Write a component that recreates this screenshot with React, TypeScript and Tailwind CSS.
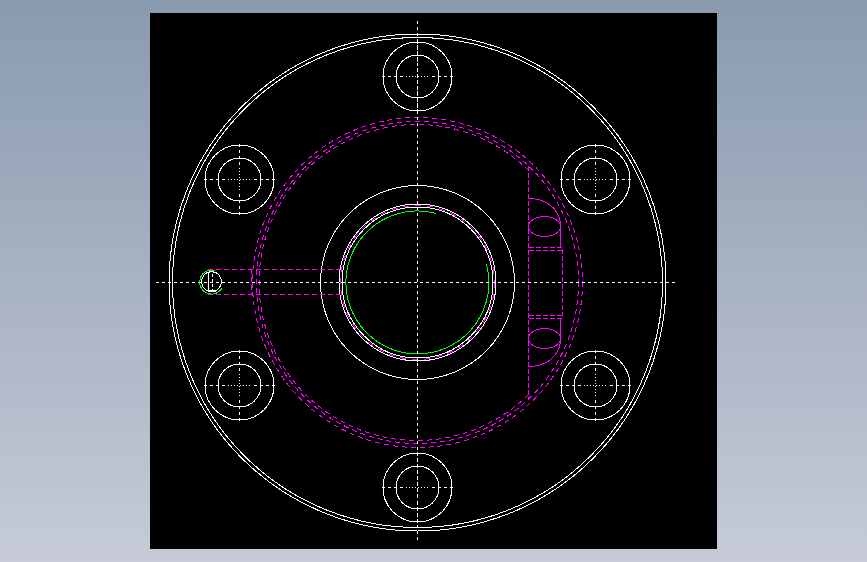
const W = "#ffffff";
const M = "#ff00ff";
const G = "#00ff00";
const cx = 417.5;
const cy = 282.5;
const bolts: [number, number][] = [
  [417.5, 76.5],
  [417.5, 487.5],
  [239.5, 179.5],
  [595.5, 179.5],
  [239.5, 385.5],
  [595.5, 385.5],
];

function Bolt({ x, y }: { x: number; y: number }) {
  return (
    <g>
      <circle cx={x} cy={y} r={34.5} stroke={W} />
      <circle cx={x} cy={y} r={21.5} stroke={W} />
      <path d={`M${x - 36} ${y}H${x - 14}M${x + 14} ${y}H${x + 36}M${x} ${y - 36}V${y - 14}M${x} ${y + 14}V${y + 36}`} stroke={W} strokeDasharray="3 3" />
      <path d={`M${x - 12} ${y}H${x + 12}M${x} ${y - 12}V${y + 12}`} stroke={W} strokeDasharray="1 2" />
    </g>
  );
}

function Pocket({ flip }: { flip: boolean }) {
  const t = flip ? `matrix(1 0 0 -1 0 ${2 * cy})` : undefined;
  return (
    <g transform={t} stroke={M}>
      <ellipse cx={544.5} cy={226.5} rx={16} ry={10} />
      <path d="M528.5 198.5C546 198.5 558 208 560.5 222.5V247" />
      <path d="M528.5 247H562.5M528.5 250H562.5" strokeDasharray="5 2" />
    </g>
  );
}

export default function App() {
  return (
    <div className="flex h-[562px] w-full items-center justify-center bg-gradient-to-b from-[#8a9aaf] to-[#c6cbd7]">
      <div className="h-[536px] w-[567px] bg-black">
        <svg viewBox="150 13 567 536" width={567} height={536} fill="none" strokeWidth={1} shapeRendering="crispEdges" className="block">
          {/* outer flange */}
          <circle cx={cx} cy={cy} r={248.5} stroke={W} />
          <circle cx={cx} cy={cy} r={245} stroke={W} />

          {/* bolt holes */}
          {bolts.map(([x, y]) => (
            <Bolt key={`${x}-${y}`} x={x} y={y} />
          ))}

          {/* hidden rings */}
          <circle cx={cx} cy={cy} r={165} stroke={M} strokeDasharray="5 4" />
          <circle cx={cx} cy={cy} r={161} stroke={M} strokeDasharray="5 4" />
          <path d="M528.5 170.5A158 158 0 1 0 528.5 394.5" stroke={M} strokeDasharray="5 4" />

          {/* hub */}
          <circle cx={cx} cy={cy} r={97} stroke={W} />
          <circle cx={cx} cy={cy} r={78.5} stroke={W} />
          <circle cx={cx} cy={cy} r={75.5} stroke={W} />
          <circle cx={cx} cy={cy} r={77} stroke={M} strokeDasharray="6 6" />
          <path d="M436 213.4A71.5 71.5 0 1 0 486.5 264" stroke={G} />

          {/* radial bore */}
          <path d="M208 269.5H340M208 294.5H340" stroke={M} strokeDasharray="5 3" />
          <path d="M251.5 269V294" stroke={M} strokeDasharray="5 3" />

          {/* right-side pockets */}
          <path d="M528.5 166V398M562.5 249V316" stroke={M} strokeDasharray="5 2" />
          <Pocket flip={false} />
          <Pocket flip={true} />

          {/* centre lines */}
          <path d="M156 282.5H678" stroke={W} strokeDasharray="3 3" />
          <path d="M417.5 21V542" stroke={W} strokeDasharray="3 3" />

          {/* small port */}
          <path d="M215 270.6A12 12 0 1 0 222 288" stroke={G} />
          <path d="M208 270.5H215" stroke={G} />
          <circle cx={211.5} cy={281.7} r={10} stroke={W} />
          <path d="M208.5 273V291M208 290.5H216M208 291.5H216" stroke={W} />
          <path d="M212.5 274V290" stroke={W} strokeDasharray="3 2" />
        </svg>
      </div>
    </div>
  );
}
